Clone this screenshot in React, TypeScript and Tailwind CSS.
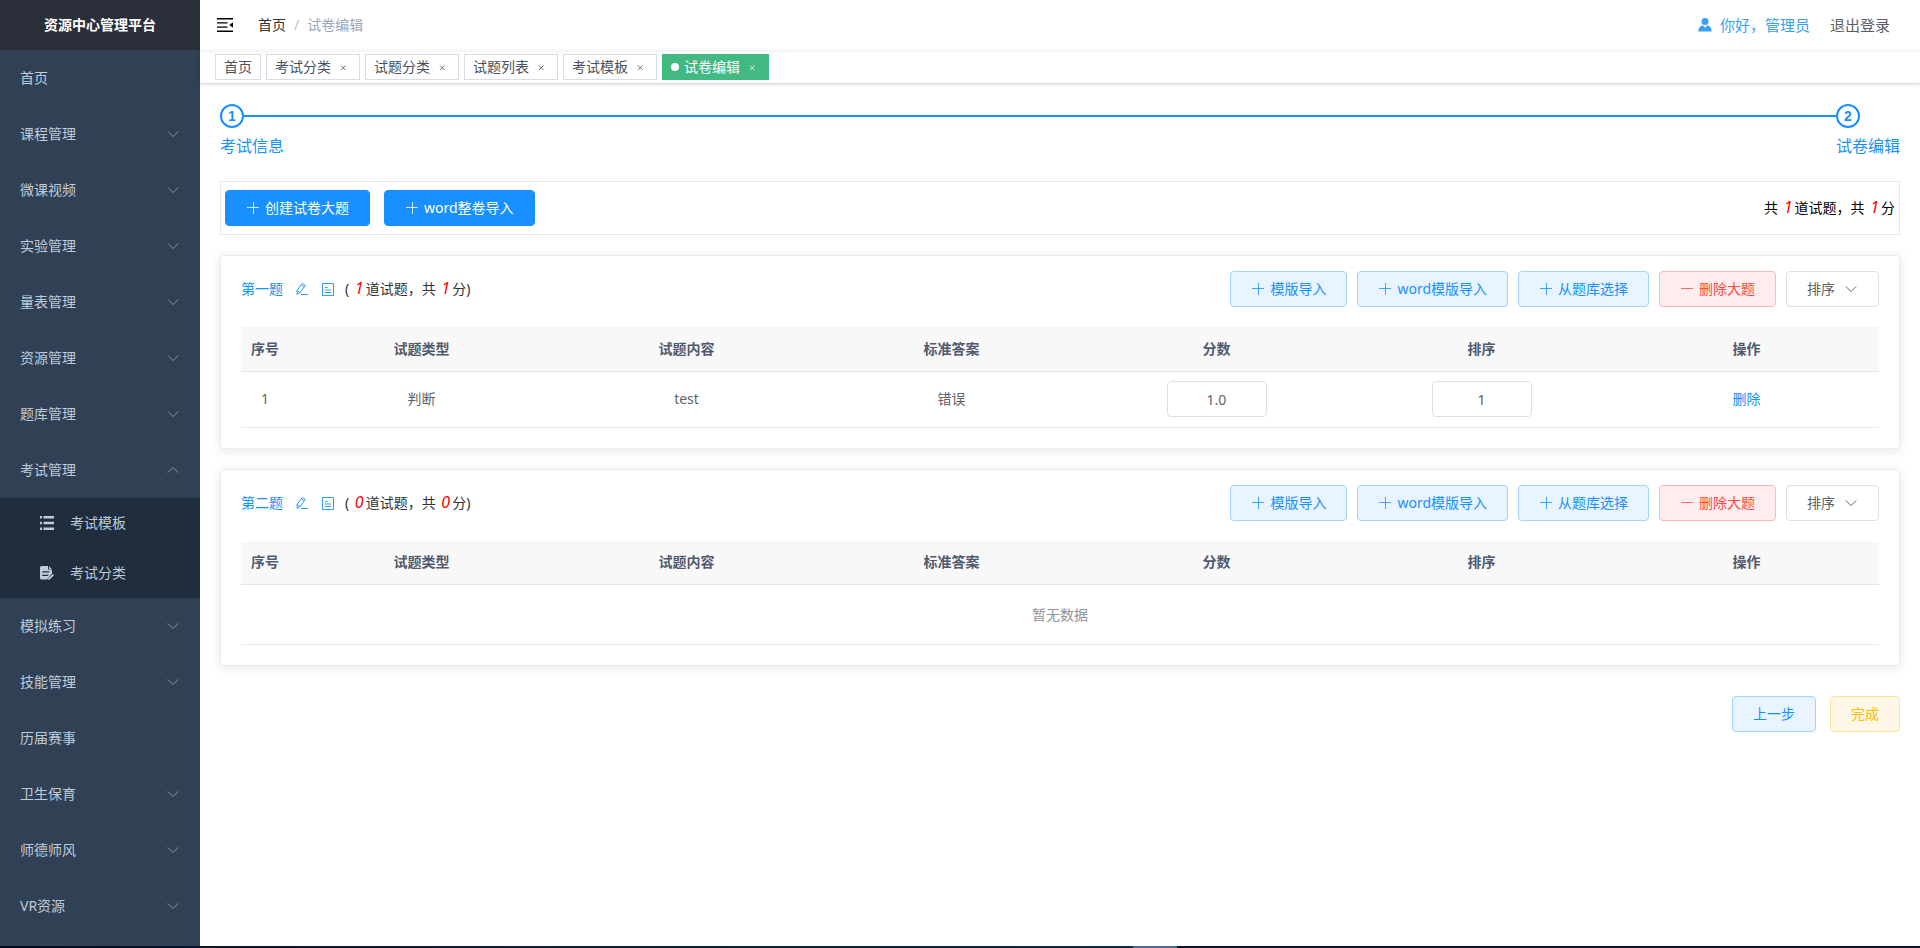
import { ReactNode } from "react";

type MenuItem = {
  label: string;
  leaf?: boolean;
  children?: { label: string; icon: ReactNode }[];
};

type Question = {
  type: string;
  content: string;
  answer: string;
  score: string;
  sort: string;
};

type Section = {
  title: string;
  count: number;
  score: number;
  questions: Question[];
};

function Chevron({ className = "", up = false }: { className?: string; up?: boolean }) {
  return (
    <svg viewBox="0 0 14 14" className={`${className} ${up ? "rotate-180" : ""}`} fill="none" stroke="currentColor">
      <path d="M1.8 4.4 7 9.600l5.200-5.200" />
    </svg>
  );
}

function PlusIcon() {
  return (
    <svg viewBox="0 0 14 14" className="size-3.5" fill="none" stroke="currentColor" strokeWidth="0.8">
      <path d="M1 6.500h12M7.500 1v12" />
    </svg>
  );
}

function MinusIcon() {
  return (
    <svg viewBox="0 0 14 14" className="size-3.5" fill="none" stroke="currentColor" strokeWidth="0.8">
      <path d="M1 6.500h12" />
    </svg>
  );
}

function EditIcon() {
  return (
    <svg viewBox="0 0 14 14" className="size-3.5" fill="none" stroke="currentColor" strokeWidth="0.9">
      <path d="M6 12.500h7M1.500 12.500h1" />
      <path d="M2.300 11.800 2 8.600 7.400 1.300l2.900 2-5.200 7.400-2.800 1.100ZM2 8.600l3.100 2.100M6.400 2.800l2.800 2" />
    </svg>
  );
}

function DocumentIcon() {
  return (
    <svg viewBox="0 0 14 14" className="size-3.5" fill="none" stroke="currentColor" strokeWidth="0.9">
      <path d="M1.500 1.500h11v12h-11zM4 5.500h2.500M4 8h6M4 10.500h6" />
    </svg>
  );
}

function FoldIcon() {
  return (
    <svg viewBox="0 0 20 20" className="size-5" fill="currentColor">
      <path d="M2 3h16v1.400H2zM2 7.200h10.500v1.400H2zM2 11.400h10.500v1.400H2zM2 15.600h16V17H2zM18 7.300v5.400L14.300 10z" />
    </svg>
  );
}

function UserIcon() {
  return (
    <svg viewBox="0 0 14 14" className="size-3.5" fill="currentColor">
      <circle cx="7" cy="3.500" r="3.500" />
      <path d="M4.600 7.300 7 9.800l2.400-2.500c2.500.6 4.100 2.700 4.300 6.200H.3c.2-3.500 1.800-5.600 4.300-6.200Z" />
    </svg>
  );
}

function ListIcon() {
  return (
    <svg viewBox="0 0 14 14" className="size-3.5" fill="currentColor">
      <path d="M0 0h2v2.500H0zM3.500 0H14v2.500H3.500zM0 5.800h2v2.400H0zM3.500 5.800H14v2.400H3.500zM0 11.500h2V14H0zM3.500 11.500H14V14H3.500z" />
    </svg>
  );
}

function PaperIcon() {
  return (
    <svg viewBox="0 0 14 14" className="size-3.5" fill="currentColor">
      <path
        fillRule="evenodd"
        d="M1.500 0H8v3.500h4V7.500L7 13.500H1.500A1.500 1.500 0 0 1 0 12V1.500A1.500 1.500 0 0 1 1.500 0ZM2.300 5.300v1.200h7V5.300ZM2.300 8.800V10h5.500l1-1.200Z"
      />
      <path d="M9 0.300 11.800 3H9zM12.800 8l1.200 1.200L9.700 13.600 8 14l.4-1.700z" />
    </svg>
  );
}

function CloseIcon() {
  return (
    <svg viewBox="0 0 16 16" className="size-4" fill="none" stroke="currentColor" strokeWidth="0.8">
      <path d="m6 6.500 4.500 4.500M10.500 6.500 6 11" />
    </svg>
  );
}

const menu: MenuItem[] = [
  { label: "首页", leaf: true },
  { label: "课程管理" },
  { label: "微课视频" },
  { label: "实验管理" },
  { label: "量表管理" },
  { label: "资源管理" },
  { label: "题库管理" },
  {
    label: "考试管理",
    children: [
      { label: "考试模板", icon: <ListIcon /> },
      { label: "考试分类", icon: <PaperIcon /> },
    ],
  },
  { label: "模拟练习" },
  { label: "技能管理" },
  { label: "历届赛事", leaf: true },
  { label: "卫生保育" },
  { label: "师德师风" },
  { label: "VR资源" },
];

const tabs = ["考试分类", "试题分类", "试题列表", "考试模板"];

const columns = ["试题类型", "试题内容", "标准答案", "分数", "排序", "操作"];

const sections: Section[] = [
  {
    title: "第一题",
    count: 1,
    score: 1,
    questions: [{ type: "判断", content: "test", answer: "错误", score: "1.0", sort: "1" }],
  },
  { title: "第二题", count: 0, score: 0, questions: [] },
];

const buttonVariants = {
  primary: "border-[#1890ff] bg-[#1890ff] text-white",
  plain: "border-[#a3d3ff] bg-[#e8f4ff] text-[#1890ff]",
  danger: "border-[#ffb6b6] bg-[#ffeded] text-[#ff4949]",
  warning: "border-[#ffe399] bg-[#fff8e6] text-[#ffba00]",
  normal: "border-[#dcdfe6] bg-white text-[#606266]",
};

type ButtonProps = {
  variant: keyof typeof buttonVariants;
  icon?: ReactNode;
  children: ReactNode;
};

function Button({ variant, icon, children }: ButtonProps) {
  return (
    <button
      type="button"
      className={`flex h-9 items-center gap-[5px] whitespace-nowrap rounded border px-5 text-sm ${buttonVariants[variant]}`}
    >
      {icon}
      {children}
    </button>
  );
}

function Sidebar() {
  return (
    <aside className="w-[200px] shrink-0 bg-[#304156] text-sm text-[#bfcbd9]">
      <h1 className="flex h-[50px] items-center justify-center bg-[#2b2f3a] font-bold text-white">资源中心管理平台</h1>
      <nav>
        <ul>
          {menu.map((item) => (
            <li key={item.label}>
              <a href="#" className="flex h-14 items-center justify-between px-5">
                {item.label}
                {item.leaf ? null : <Chevron up={Boolean(item.children)} className="size-3.5 text-[#909399]" />}
              </a>
              {item.children ? (
                <ul className="bg-[#1f2d3d]">
                  {item.children.map((child) => (
                    <li key={child.label}>
                      <a href="#" className="flex h-[50px] items-center gap-4 pl-10">
                        {child.icon}
                        {child.label}
                      </a>
                    </li>
                  ))}
                </ul>
              ) : null}
            </li>
          ))}
        </ul>
      </nav>
    </aside>
  );
}

function Navbar() {
  return (
    <header className="flex h-[50px] items-center justify-between pl-[15px] pr-[30px] shadow-[0_1px_4px_rgba(0,21,41,0.08)]">
      <div className="flex items-center">
        <button type="button" aria-label="收起菜单" className="text-black">
          <FoldIcon />
        </button>
        <nav className="ml-[23px] flex items-center gap-2 text-sm">
          <a href="#" className="text-[#303133]">
            首页
          </a>
          <span className="text-[#c0c4cc]">/</span>
          <span className="text-[#97a8be]">试卷编辑</span>
        </nav>
      </div>
      <div className="flex items-center gap-5 text-[15px]">
        <span className="flex items-center gap-2 text-[#3a9ff5]">
          <UserIcon />
          你好，管理员
        </span>
        <a href="#" className="text-[#5a5e66]">
          退出登录
        </a>
      </div>
    </header>
  );
}

function TagsView() {
  return (
    <div className="flex h-[34px] items-center gap-[5px] border-b border-[#d8dce5] px-[15px] text-sm text-[#495060] shadow-[0_1px_3px_rgba(0,0,0,0.12)]">
      <a href="#" className="flex h-[26px] items-center border border-[#d8dce5] bg-white px-2">
        首页
      </a>
      {tabs.map((tab) => (
        <a key={tab} href="#" className="flex h-[26px] items-center gap-1 border border-[#d8dce5] bg-white px-2">
          {tab}
          <CloseIcon />
        </a>
      ))}
      <a href="#" className="flex h-[26px] items-center gap-1 border border-[#42b983] bg-[#42b983] px-2 text-white">
        <span className="mr-px size-2 rounded-full bg-white" />
        试卷编辑
        <CloseIcon />
      </a>
    </div>
  );
}

function StepNumber({ children }: { children: ReactNode }) {
  return (
    <span className="flex size-6 items-center justify-center rounded-full border-2 border-[#1890ff] font-['Liberation_Sans',sans-serif] text-sm font-bold">
      {children}
    </span>
  );
}

function Steps() {
  return (
    <ol className="flex text-base leading-9 text-[#1890ff]">
      <li className="flex-1">
        <div className="flex items-center">
          <StepNumber>1</StepNumber>
          <span className="h-0.5 flex-1 bg-[#1890ff]" />
        </div>
        <p>考试信息</p>
      </li>
      <li>
        <StepNumber>2</StepNumber>
        <p>试卷编辑</p>
      </li>
    </ol>
  );
}

function Count({ value }: { value: number }) {
  return <em className="px-0.5 text-base leading-none text-[#ff0000]">{value}</em>;
}

function SectionCard({ section }: { section: Section }) {
  return (
    <section className="mt-5 rounded border border-[#e6ebf5] bg-white px-5 pb-5 pt-[15px] shadow-[0_2px_12px_rgba(0,0,0,0.1)]">
      <div className="flex items-center justify-between">
        <div className="flex items-center text-sm text-[#303133]">
          <h2 className="text-[#1890ff]">{section.title}</h2>
          <button type="button" aria-label="编辑" className="ml-3 text-[#1890ff]">
            <EditIcon />
          </button>
          <button type="button" aria-label="备注" className="ml-3 mr-2.5 text-[#1890ff]">
            <DocumentIcon />
          </button>
          <p>
            ( <Count value={section.count} />
            道试题，共 <Count value={section.score} />
            分)
          </p>
        </div>
        <div className="flex gap-2.5">
          <Button variant="plain" icon={<PlusIcon />}>
            模版导入
          </Button>
          <Button variant="plain" icon={<PlusIcon />}>
            word模版导入
          </Button>
          <Button variant="plain" icon={<PlusIcon />}>
            从题库选择
          </Button>
          <Button variant="danger" icon={<MinusIcon />}>
            删除大题
          </Button>
          <Button variant="normal">
            排序
            <Chevron className="ml-1 size-3.5" />
          </Button>
        </div>
      </div>

      <table className="mt-5 w-full table-fixed text-center text-sm text-[#606266]">
        <thead>
          <tr className="h-11 border-b border-[#dfe6ec] bg-[#f8f8f9] text-[#515a6e]">
            <th className="w-12 font-bold">序号</th>
            {columns.map((column) => (
              <th key={column} className="font-bold">
                {column}
              </th>
            ))}
          </tr>
        </thead>
        <tbody>
          {section.questions.map((question, index) => (
            <tr key={question.content} className="h-14 border-b border-[#e6ebf5]">
              <td>{index + 1}</td>
              <td>{question.type}</td>
              <td>{question.content}</td>
              <td>{question.answer}</td>
              <td>
                <input
                  aria-label="分数"
                  defaultValue={question.score}
                  className="h-9 w-[100px] rounded border border-[#dcdfe6] text-center"
                />
              </td>
              <td>
                <input
                  aria-label="排序"
                  defaultValue={question.sort}
                  className="h-9 w-[100px] rounded border border-[#dcdfe6] text-center"
                />
              </td>
              <td>
                <button type="button" className="text-[#1890ff]">
                  删除
                </button>
              </td>
            </tr>
          ))}
          {section.questions.length === 0 ? (
            <tr className="h-[60px] border-b border-[#e6ebf5] text-[#909399]">
              <td colSpan={7}>暂无数据</td>
            </tr>
          ) : null}
        </tbody>
      </table>
    </section>
  );
}

export default function App() {
  return (
    <div className="flex min-h-screen flex-col bg-white font-['Noto_Sans','Noto_Sans_CJK_SC',sans-serif]">
      <div className="flex flex-1">
        <Sidebar />
        <div className="min-w-0 flex-1">
          <Navbar />
          <TagsView />
          <main className="p-5">
            <Steps />
            <div className="mt-[17px] flex items-center justify-between border border-[#e6e6e6] px-1 py-2">
              <div className="flex gap-3.5">
                <Button variant="primary" icon={<PlusIcon />}>
                  创建试卷大题
                </Button>
                <Button variant="primary" icon={<PlusIcon />}>
                  word整卷导入
                </Button>
              </div>
              <p className="text-sm text-black">
                共 <Count value={1} />
                道试题，共 <Count value={1} />分
              </p>
            </div>
            {sections.map((section) => (
              <SectionCard key={section.title} section={section} />
            ))}
            <div className="mt-[30px] flex justify-end gap-3.5">
              <Button variant="plain">上一步</Button>
              <Button variant="warning">完成</Button>
            </div>
          </main>
        </div>
      </div>
      <footer className="flex h-0.5 bg-[#0a1030]">
        <span className="w-[59%] bg-linear-to-r from-[#0a0a20] via-[#0a2040] to-[#0a2848]" />
        <span className="w-11 bg-[#4a6c96]" />
      </footer>
    </div>
  );
}
